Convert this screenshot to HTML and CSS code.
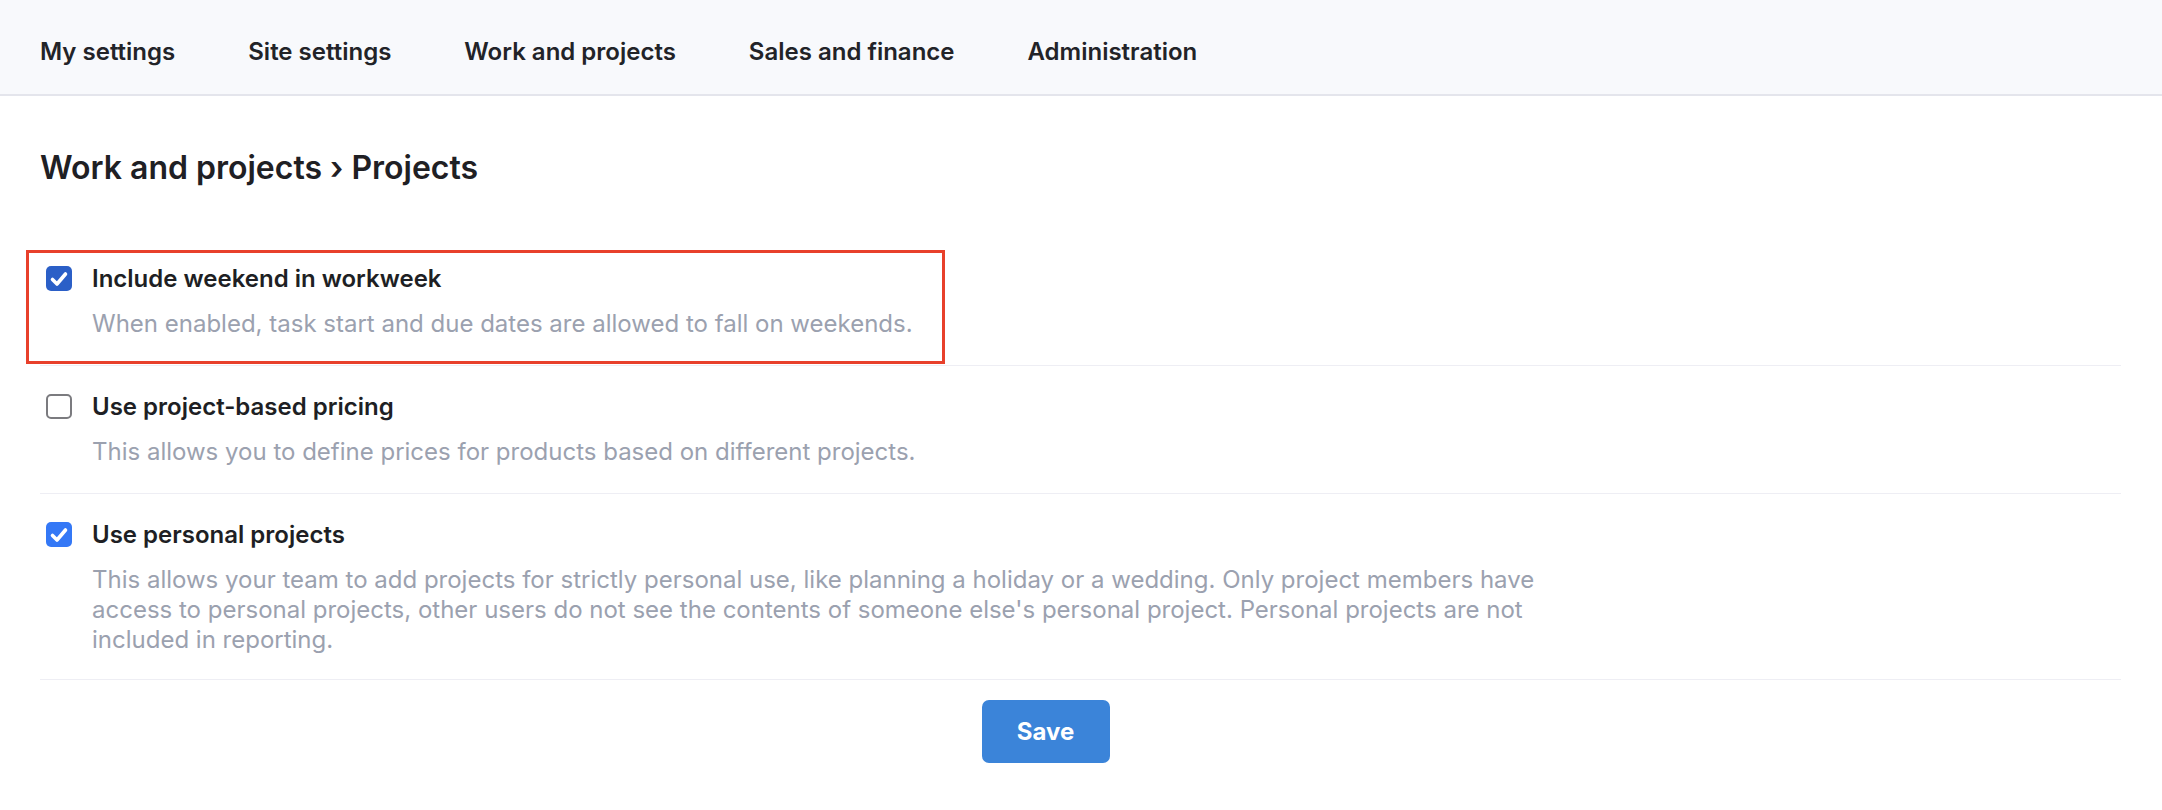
FILE: index.html
```html
<!DOCTYPE html>
<html lang="en">
<head>
<meta charset="utf-8">
<title>Work and projects › Projects</title>
<link rel="stylesheet" href="styles.css">
</head>
<body>
<nav class="topnav">
  <a class="nav-item">My settings</a>
  <a class="nav-item">Site settings</a>
  <a class="nav-item">Work and projects</a>
  <a class="nav-item">Sales and finance</a>
  <a class="nav-item">Administration</a>
</nav>
<main class="page">
  <h1 class="title">Work and projects › Projects</h1>
  <section class="settings">
    <div class="setting highlighted">
      <div class="highlight-box"></div>
      <div class="setting-row">
        <span class="checkbox checked dark"><svg viewBox="0 0 24 24"><path d="M5.5 12.5 L10 17 L18.5 7" /></svg></span>
        <div class="setting-text">
          <div class="label">Include weekend in workweek</div>
          <div class="desc">When enabled, task start and due dates are allowed to fall on weekends.</div>
        </div>
      </div>
    </div>
    <div class="setting">
      <div class="setting-row">
        <span class="checkbox"></span>
        <div class="setting-text">
          <div class="label">Use project-based pricing</div>
          <div class="desc">This allows you to define prices for products based on different projects.</div>
        </div>
      </div>
    </div>
    <div class="setting">
      <div class="setting-row">
        <span class="checkbox checked"><svg viewBox="0 0 24 24"><path d="M5.5 12.5 L10 17 L18.5 7" /></svg></span>
        <div class="setting-text">
          <div class="label">Use personal projects</div>
          <div class="desc">This allows your team to add projects for strictly personal use, like planning a holiday or a wedding. Only project members have access to personal projects, other users do not see the contents of someone else's personal project. Personal projects are not included in reporting.</div>
        </div>
      </div>
    </div>
  </section>
  <div class="actions">
    <button class="save-btn" type="button">Save</button>
  </div>
</main>
</body>
</html>
```
FILE: styles.css
```css
* { box-sizing: border-box; }
html, body { margin: 0; padding: 0; background: #ffffff; }
body {
  font-family: Inter, "Noto Sans", "Liberation Sans", sans-serif;
  color: #1e1f24;
}
.topnav {
  display: flex;
  align-items: center;
  height: 96px;
  padding: 8px 40px 0;
  gap: 73px;
  background: #f8f9fc;
  border-bottom: 2px solid #e4e5ec;
}
.nav-item {
  font-size: 24px;
  font-weight: 600;
  color: #222328;
}
.page {
  padding: 52px 41px 0 40px;
}
.title {
  margin: 0;
  font-size: 32px;
  line-height: 40px;
  font-weight: 600;
  color: #1f2024;
}
.settings {
  margin-top: 50px;
}
.setting {
  position: relative;
  padding: 26px 0 26px;
  border-bottom: 1px solid #eeeef4;
}
.setting:last-child {
  padding-bottom: 24px;
}
.highlight-box {
  position: absolute;
  left: -14px;
  top: 12px;
  width: 919px;
  height: 114px;
  border: 3px solid #e8402b;
  pointer-events: none;
}
.setting-row {
  display: flex;
  align-items: flex-start;
  gap: 20px;
  padding-left: 6px;
}
.checkbox {
  flex: none;
  width: 26px;
  height: 25px;
  margin-top: 2px;
  border: 2px solid #7b7b7f;
  border-radius: 5px;
  background: #ffffff;
  display: flex;
  align-items: center;
  justify-content: center;
}
.checkbox.checked {
  border: none;
  background: #3478f6;
}
.checkbox.checked.dark {
  background: #2b5fc7;
}
.checkbox svg {
  width: 24px;
  height: 24px;
}
.checkbox svg path {
  fill: none;
  stroke: #ffffff;
  stroke-width: 3.6;
  stroke-linecap: round;
  stroke-linejoin: round;
}
.setting-text {
  display: flex;
  flex-direction: column;
  gap: 15px;
}
.label {
  font-size: 24px;
  line-height: 30px;
  font-weight: 600;
  color: #1e1f24;
}
.desc {
  font-size: 24px;
  line-height: 30px;
  font-weight: 400;
  color: #9ba1af;
  max-width: 1460px;
}
.actions {
  display: flex;
  justify-content: center;
  padding: 20px 70px 0 0;
}
.save-btn {
  width: 128px;
  height: 63px;
  border: none;
  border-radius: 7px;
  background: #3b84d9;
  color: #ffffff;
  font-family: Inter, "Noto Sans", "Liberation Sans", sans-serif;
  font-size: 24px;
  font-weight: 700;
  cursor: pointer;
}
```
